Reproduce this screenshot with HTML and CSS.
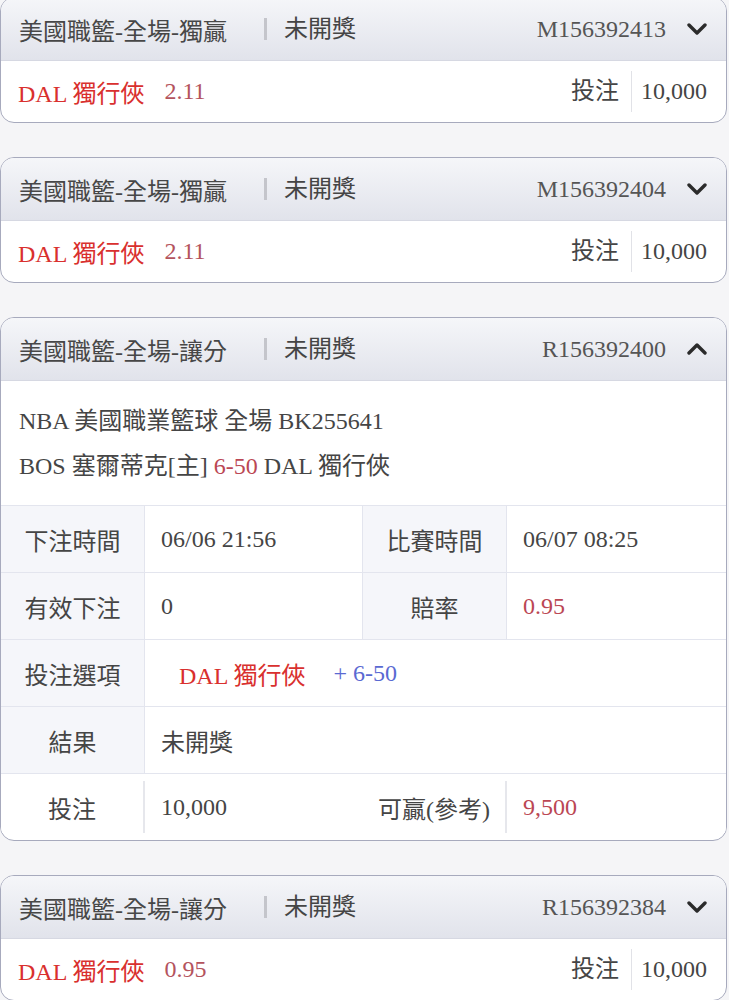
FILE: index.html
```html
<!DOCTYPE html>
<html>
<head>
  <meta charset="UTF-8">
  <title>注單紀錄</title>
  <meta name="viewport" content="width=device-width, initial-scale=1">
  <link rel="stylesheet" href="styles.css">
</head>
<body>

  <div class="list">

    <div class="card">
      <div class="card-head">
        <span class="title">美國職籃-全場-獨贏</span>
        <span class="status">未開獎</span>
        <span class="order">M156392413</span>
        <svg class="chev" width="20" height="12" viewBox="0 0 20 12"><polyline points="2,2 10,10 18,2" /></svg>
      </div>
      <div class="card-body">
        <span class="pick">DAL 獨行俠</span>
        <span class="odds">2.11</span>
        <span class="stake-label">投注</span>
        <span class="stake">10,000</span>
      </div>
    </div>

    <div class="card">
      <div class="card-head">
        <span class="title">美國職籃-全場-獨贏</span>
        <span class="status">未開獎</span>
        <span class="order">M156392404</span>
        <svg class="chev" width="20" height="12" viewBox="0 0 20 12"><polyline points="2,2 10,10 18,2" /></svg>
      </div>
      <div class="card-body">
        <span class="pick">DAL 獨行俠</span>
        <span class="odds">2.11</span>
        <span class="stake-label">投注</span>
        <span class="stake">10,000</span>
      </div>
    </div>

    <div class="card">
      <div class="card-head">
        <span class="title">美國職籃-全場-讓分</span>
        <span class="status">未開獎</span>
        <span class="order">R156392400</span>
        <svg class="chev" width="20" height="12" viewBox="0 0 20 12"><polyline points="2,10 10,2 18,10" /></svg>
      </div>
      <div class="info">
        <div>NBA 美國職業籃球 全場 BK255641</div>
        <div>BOS 塞爾蒂克[主] <span class="hl">6-50</span> DAL 獨行俠</div>
      </div>
      <div class="detail">
        <div class="row">
          <div class="label">下注時間</div>
          <div class="value">06/06 21:56</div>
          <div class="label">比賽時間</div>
          <div class="value">06/07 08:25</div>
        </div>
        <div class="row">
          <div class="label">有效下注</div>
          <div class="value">0</div>
          <div class="label">賠率</div>
          <div class="value hl">0.95</div>
        </div>
        <div class="row">
          <div class="label">投注選項</div>
          <div class="value wide"><span class="pick">DAL 獨行俠</span><span class="line">+ 6-50</span></div>
        </div>
        <div class="row">
          <div class="label">結果</div>
          <div class="value wide">未開獎</div>
        </div>
        <div class="row plain">
          <div class="label">投注</div>
          <div class="value">10,000</div>
          <div class="label">可贏(參考)</div>
          <div class="value hl">9,500</div>
        </div>
      </div>
    </div>

    <div class="card">
      <div class="card-head">
        <span class="title">美國職籃-全場-讓分</span>
        <span class="status">未開獎</span>
        <span class="order">R156392384</span>
        <svg class="chev" width="20" height="12" viewBox="0 0 20 12"><polyline points="2,2 10,10 18,2" /></svg>
      </div>
      <div class="card-body">
        <span class="pick">DAL 獨行俠</span>
        <span class="odds">0.95</span>
        <span class="stake-label">投注</span>
        <span class="stake">10,000</span>
      </div>
    </div>

  </div>

</body>
</html>
```

FILE: styles.css
```css
body {
  margin: 0;
  background: #f5f5f7;
  font-family: "Liberation Serif", "Noto Sans CJK TC", serif;
  font-size: 24px;
  color: #454545;
}
.list {
  margin-top: -3px;
  padding-right: 2px;
  display: flex;
  flex-direction: column;
  gap: 34px;
}
.card {
  background: white;
  border: 1px solid #a7aabd;
  border-radius: 14px;
  overflow: hidden;
}
.card-head {
  height: 63px;
  box-sizing: border-box;
  display: flex;
  align-items: center;
  padding: 0 19px 0 18px;
  background: linear-gradient(#f5f6f9, #e1e3eb);
  border-bottom: 1px solid #d6d8e2;
}
.title {
  color: #474747;
}
.status {
  margin-left: 37px;
  padding-left: 17px;
  border-left: 3px solid #c4c5cb;
  line-height: 22px;
}
.order {
  margin-left: auto;
  color: #555;
}
.chev {
  margin-left: 21px;
}
.chev polyline {
  fill: none;
  stroke: #2b2b2b;
  stroke-width: 3.4;
  stroke-linecap: round;
  stroke-linejoin: round;
}
.card-body {
  height: 61px;
  display: flex;
  align-items: center;
  padding: 0 19px 0 17px;
}
.pick {
  color: #d9302e;
}
.odds {
  margin-left: 20px;
  color: #b4535d;
}
.stake-label {
  margin-left: auto;
  padding-right: 12px;
  border-right: 1px solid #e1e2e7;
  line-height: 41px;
}
.stake {
  padding-left: 9px;
}
.info {
  padding: 18px 18px 16px;
  line-height: 45px;
}
.hl {
  color: #bb4754;
}
.row {
  display: grid;
  grid-template-columns: 144px 218px 144px 1fr;
  height: 67px;
  box-sizing: border-box;
  border-top: 1px solid #e3e5ee;
}
.label {
  display: flex;
  align-items: center;
  justify-content: center;
  background: #f5f6fa;
  border-right: 1px solid #e3e5ee;
}
.value {
  display: flex;
  align-items: center;
  padding-left: 16px;
  border-right: 1px solid #e3e5ee;
}
.value:last-child {
  border-right: none;
}
.value.wide {
  grid-column: span 3;
}
.value.wide .pick {
  margin-left: 18px;
}
.line {
  margin-left: 28px;
  color: #5a69d2;
}
.row.plain {
  align-items: center;
}
.row.plain .label,
.row.plain .value {
  background: white;
  height: 52px;
}
.row.plain .value {
  border-right: none;
}
.row.plain .label {
  border-right: 2px solid #e6e7ec;
}
```
